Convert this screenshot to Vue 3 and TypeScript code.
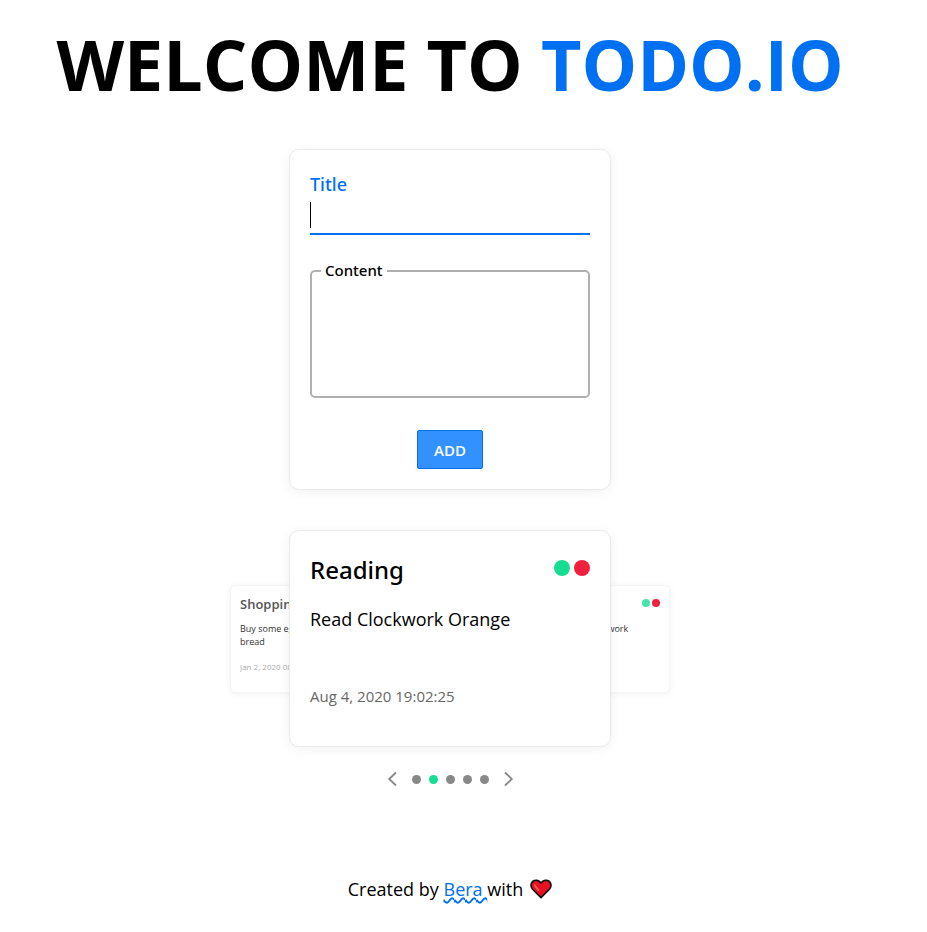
<script setup lang="ts">
import { computed, ref } from 'vue'

interface Todo {
  title: string
  content: string
  date: string
}

const todos = ref<Todo[]>([
  { title: 'Shopping', content: 'Buy some eggs bread', date: 'Jan 2, 2020 08:15' },
  { title: 'Reading', content: 'Read Clockwork Orange', date: 'Aug 4, 2020 19:02:25' },
  { title: 'School', content: 'Finish all math homework', date: 'Sep 7, 2020' },
  { title: 'Sport', content: 'Go for a run', date: 'Sep 9, 2020 10:30:12' },
  { title: 'Music', content: 'Practice guitar', date: 'Oct 1, 2020 17:45:09' },
])

const active = ref(1)
const title = ref('')
const content = ref('')

const at = (offset: number) => (active.value + offset + todos.value.length) % todos.value.length
const visible = computed(() => [
  { place: 'prev', todo: todos.value[at(-1)] },
  { place: 'current', todo: todos.value[active.value] },
  { place: 'next', todo: todos.value[at(1)] },
])

function add() {
  if (!title.value) return
  todos.value.push({ title: title.value, content: content.value, date: new Date().toLocaleString() })
  title.value = ''
  content.value = ''
}

function remove(todo: Todo) {
  if (todos.value.length < 2) return
  todos.value = todos.value.filter((t) => t !== todo)
  active.value = Math.min(active.value, todos.value.length - 1)
}
</script>

<template>
  <main class="page">
    <h1 class="heading">WELCOME TO <span class="brand">TODO.IO</span></h1>

    <form class="panel form" @submit.prevent="add">
      <label class="title-label" for="title">Title</label>
      <input id="title" v-model="title" class="title-input" type="text" autocomplete="off" />
      <fieldset class="content-box">
        <legend class="legend"><label for="content">Content</label></legend>
        <textarea id="content" v-model="content" class="content-input"></textarea>
      </fieldset>
      <button class="add" type="submit">ADD</button>
    </form>

    <section class="carousel">
      <article v-for="item in visible" :key="item.place" class="card" :class="item.place">
        <header class="card-head">
          <h2 class="card-title">{{ item.todo.title }}</h2>
          <div class="actions">
            <button class="dot done" type="button" aria-label="Done"></button>
            <button class="dot delete" type="button" aria-label="Delete" @click="remove(item.todo)"></button>
          </div>
        </header>
        <p class="card-text">{{ item.todo.content }}</p>
        <time class="card-date">{{ item.todo.date }}</time>
      </article>
    </section>

    <nav class="pager">
      <button class="arrow" type="button" aria-label="Previous" @click="active = at(-1)">
        <svg width="10" height="16" viewBox="0 0 10 16"><path d="M9 1.500 2.200 8 9 14.500" /></svg>
      </button>
      <div class="pages">
        <button
          v-for="(todo, i) in todos"
          :key="i"
          class="page-dot"
          :class="{ selected: i === active }"
          type="button"
          :aria-label="todo.title"
          @click="active = i"
        ></button>
      </div>
      <button class="arrow" type="button" aria-label="Next" @click="active = at(1)">
        <svg width="10" height="16" viewBox="0 0 10 16"><path d="M1 1.500 7.800 8 1 14.500" /></svg>
      </button>
    </nav>

    <footer class="footer">
      <span>Created by <a class="author" href="#">Bera&nbsp;</a>with</span>
      <svg class="heart" width="22" height="20" viewBox="0 0 22 20">
        <path
          d="M11 18.600 2.400 10C.4 7.800.6 4.400 2.700 2.500 5.200.4 8.900 1.100 11 3.900 13.100 1.100 16.800.4 19.300 2.500 21.400 4.400 21.600 7.800 19.600 10Z"
          fill="#e81123"
          stroke="#111"
          stroke-width="1.700"
          stroke-linejoin="round"
        />
        <path d="M5 6.200C5.200 7.800 6.600 9.200 8.500 11" fill="none" stroke="#f25c4c" stroke-width="2" stroke-linecap="round" />
      </svg>
    </footer>
  </main>
</template>

<style>
body {
  margin: 0;
  background: #fff;
}
</style>

<style scoped>
.page {
  display: flex;
  flex-direction: column;
  align-items: center;
  padding: 14px 27px 24px 0;
  color: #000;
  font-family: 'Segoe UI', 'Open Sans', 'Noto Sans', sans-serif;
  font-size: 18px;
  line-height: 26px;
}

button {
  padding: 0;
  border: 0;
  background: none;
  font: inherit;
  cursor: pointer;
}

.heading {
  margin: 0;
  font-size: 70px;
  font-weight: 700;
  line-height: 100px;
  white-space: nowrap;
}

.brand {
  color: #0070f3;
}

.panel,
.card {
  box-sizing: border-box;
  background: #fff;
  border: 1px solid #eaeaea;
  border-radius: 10px;
  box-shadow: 0 2px 12px rgba(0, 0, 0, 0.06);
}

.form {
  display: flex;
  flex-direction: column;
  width: 322px;
  margin-top: 35px;
  padding: 21px 20px 20px;
}

.title-label {
  color: #0070f3;
  font-family: 'Segoe UI', 'Noto Sans', sans-serif;
  font-weight: 500;
}

.title-input {
  height: 38px;
  box-sizing: border-box;
  padding: 0 0 4px;
  border: 0;
  border-bottom: 2px solid #0070f3;
  outline: 0;
  font: inherit;
  background: linear-gradient(#000, #000) 0 5px / 1px 26px no-repeat;
}

.title-input:focus {
  background: none;
}

.content-box {
  min-width: 0;
  margin: 26px 0 0;
  padding: 0 9px 6px;
  border: 2px solid #b0b0b0;
  border-radius: 5px;
}

.legend {
  padding: 0 4px 2px;
  font-family: 'Segoe UI', 'Noto Sans', sans-serif;
  font-size: 15px;
  font-weight: 500;
  line-height: 18px;
}

.content-input {
  display: block;
  box-sizing: border-box;
  width: 100%;
  height: 109px;
  padding: 0;
  border: 0;
  outline: 0;
  resize: none;
  background: none;
  font: inherit;
}

.add {
  align-self: center;
  width: 66px;
  height: 39px;
  margin-top: 32px;
  border: 1px solid #0070f3;
  border-radius: 2px;
  background: #3291ff;
  color: #fff;
  font-size: 15px;
  font-weight: 600;
}

.carousel {
  display: flex;
  align-items: center;
  justify-content: center;
  margin-top: 40px;
}

.card {
  position: relative;
  display: flex;
  flex-direction: column;
}

.card-head {
  display: flex;
  justify-content: space-between;
}

.card-title,
.card-text {
  margin: 0;
}

.actions {
  display: flex;
}

.dot {
  border-radius: 50%;
}

.done {
  background: #17dd92;
}

.delete {
  background: #f0213c;
}

.current {
  z-index: 1;
  width: 322px;
  height: 217px;
  padding: 21px 20px 37px;
}

.current .card-title {
  font-family: 'Segoe UI', 'Noto Sans', sans-serif;
  font-size: 24px;
  font-weight: 500;
  line-height: 36px;
}

.current .actions {
  gap: 4px;
  padding-top: 8px;
}

.current .dot {
  width: 16px;
  height: 16px;
}

.current .card-text {
  margin-top: 18px;
}

.card-date {
  margin-top: auto;
  color: #666;
}

.current .card-date {
  font-size: 15px;
}

.prev,
.next {
  width: 160px;
  height: 108px;
  padding: 9px 9px 19px;
  border-color: #f5f5f5;
  border-radius: 5px;
  box-shadow: 0 1px 6px rgba(0, 0, 0, 0.06);
  font-size: 9px;
  line-height: 13px;
}

.prev {
  margin-right: -101px;
}

.next {
  margin-left: -101px;
}

.prev .card-title,
.next .card-title {
  color: #555;
  font-size: 13px;
  font-weight: 600;
  line-height: 18px;
}

.prev .card-text,
.next .card-text {
  margin-top: 9px;
  color: #333;
}

.prev .card-text,
.prev .card-date {
  max-width: 68px;
}

.prev .card-date,
.next .card-date {
  overflow: hidden;
  color: #aaa;
  font-size: 8px;
  white-space: nowrap;
}

.prev .actions,
.next .actions {
  gap: 2px;
  padding-top: 4px;
}

.prev .dot,
.next .dot {
  width: 8px;
  height: 8px;
}

.prev .done,
.next .done {
  background: #45e4a8;
}

.pager {
  display: flex;
  align-items: center;
  gap: 15px;
  margin-top: 24px;
}

.arrow {
  display: flex;
}

.arrow path {
  fill: none;
  stroke: #888;
  stroke-width: 1.8;
}

.pages {
  display: flex;
  gap: 8px;
}

.page-dot {
  width: 9px;
  height: 9px;
  border-radius: 50%;
  background: #888;
}

.page-dot.selected {
  background: #17dd92;
}

.footer {
  display: flex;
  align-items: center;
  gap: 7px;
  margin-top: 89px;
}

.author {
  color: #0070f3;
  text-decoration: underline wavy 2px #0070f3;
}
</style>
